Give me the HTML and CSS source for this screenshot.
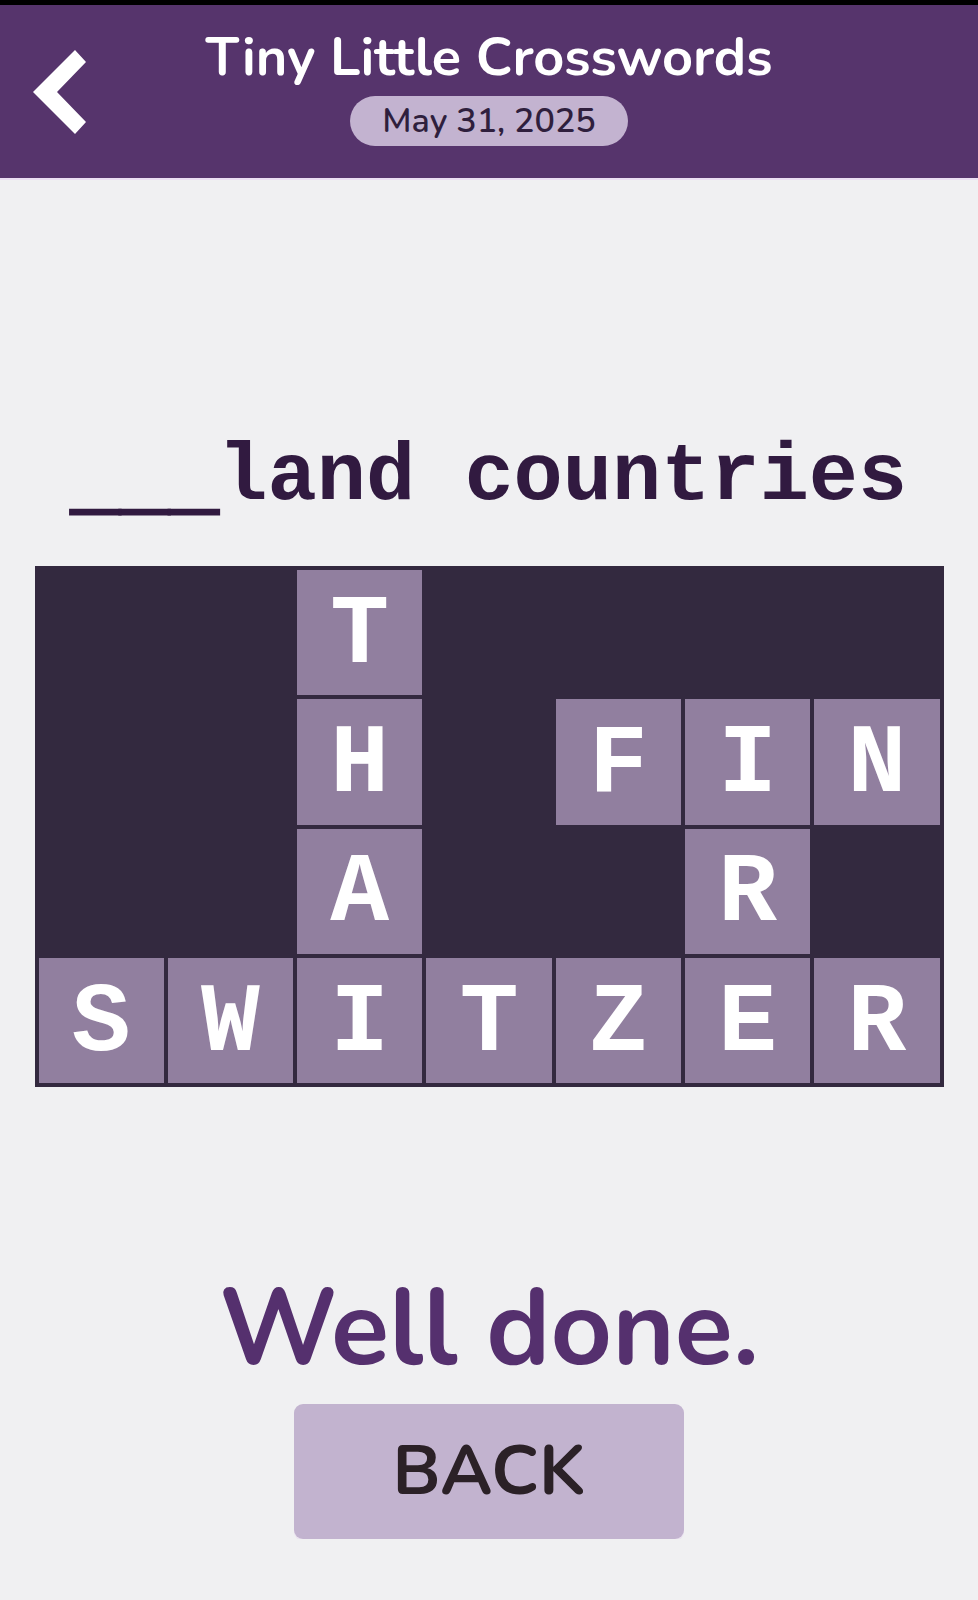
FILE: index.html
```html
<!DOCTYPE html>
<html lang="en">
<head>
  <meta charset="UTF-8" />
  <title>Tiny Little Crosswords</title>
  <link rel="stylesheet" href="styles.css">
</head>
<body>

<div class="statusbar"></div>

<header class="topbar">
  <button class="back-arrow" aria-label="Back">
    <svg width="60" height="90" viewBox="28 47 60 90">
      <polygon points="75,50 86,62 57,92 86,122 75,134 33,92" fill="#fff" />
    </svg>
  </button>
  <div class="title-block">
    <h1>Tiny Little Crosswords</h1>
    <span class="date-pill">May 31, 2025</span>
  </div>
  <div></div>
</header>

<main class="puzzle">
  <p class="clue"><span class="blank">___</span>land countries</p>

  <div class="board">
    <!-- fila 1 -->
    <div class="cell block"></div>
    <div class="cell block"></div>
    <div class="cell">T</div>
    <div class="cell block"></div>
    <div class="cell block"></div>
    <div class="cell block"></div>
    <div class="cell block"></div>
    <!-- fila 2 -->
    <div class="cell block"></div>
    <div class="cell block"></div>
    <div class="cell">H</div>
    <div class="cell block"></div>
    <div class="cell">F</div>
    <div class="cell">I</div>
    <div class="cell">N</div>
    <!-- fila 3 -->
    <div class="cell block"></div>
    <div class="cell block"></div>
    <div class="cell">A</div>
    <div class="cell block"></div>
    <div class="cell block"></div>
    <div class="cell">R</div>
    <div class="cell block"></div>
    <!-- fila 4 -->
    <div class="cell">S</div>
    <div class="cell">W</div>
    <div class="cell">I</div>
    <div class="cell">T</div>
    <div class="cell">Z</div>
    <div class="cell">E</div>
    <div class="cell">R</div>
  </div>

  <h2 class="done">Well done.</h2>
  <button class="back-btn">BACK</button>
</main>

</body>
</html>
```

FILE: styles.css
```css
body {
  margin: 0;
  background: #f0f0f2;
  font-family: "Nunito", "Lato", sans-serif;
}

.statusbar {
  height: 5px;
  background: #000;
}

.topbar {
  display: grid;
  grid-template-columns: 1fr auto 1fr;
  height: 173px;
  background: #56346c;
  border-bottom: 2px solid #ebdff3;
}

.back-arrow {
  align-self: center;
  justify-self: start;
  display: flex;
  padding: 0 0 0 28px;
  margin: 0;
  border: none;
  background: none;
  cursor: pointer;
}

.back-arrow svg {
  display: block;
}

.title-block {
  display: flex;
  flex-direction: column;
  align-items: center;
  padding-top: 20px;
}

.topbar h1 {
  margin: 0;
  color: #fff;
  font-size: 54px;
  font-weight: 700;
  line-height: 1.2;
}

.date-pill {
  margin-top: 6px;
  padding: 0 32px;
  height: 50px;
  line-height: 50px;
  border-radius: 25px;
  background: #c3b3d0;
  color: #2f1f3d;
  font-size: 34px;
  font-weight: 600;
}

.puzzle {
  display: flex;
  flex-direction: column;
  align-items: center;
}

.clue {
  margin: 257px 0 0;
  font-family: "Liberation Mono", monospace;
  font-weight: bold;
  font-size: 82px;
  line-height: 1;
  color: #311a40;
}

/* rayas del hueco, más gruesas y un poco más abajo */
.clue .blank {
  -webkit-text-stroke: 3px #311a40;
  vertical-align: -6px;
}

.board {
  display: grid;
  grid-template-columns: repeat(7, 1fr);
  gap: 4px;
  width: 909px;
  box-sizing: border-box;
  padding: 4px;
  margin-top: 41px;
  background: #33293f;
}

.cell {
  aspect-ratio: 1;
  display: flex;
  align-items: center;
  justify-content: center;
  padding-top: 6px;
  box-sizing: border-box;
  background: #917f9f;
  color: #fff;
  font-family: "Liberation Mono", monospace;
  font-weight: bold;
  font-size: 98px;
  line-height: 1;
}

.cell.block {
  background: #33293f;
}

.done {
  margin: 178px 0 0;
  color: #55306e;
  font-size: 107px;
  font-weight: 700;
  line-height: 1.2;
}

.back-btn {
  margin-top: 10px;
  width: 390px;
  height: 135px;
  border: none;
  border-radius: 9px;
  background: #c2b3cf;
  box-shadow: 0 2px 0 #ebe3f0;
  color: #2b2127;
  font-family: inherit;
  font-size: 70px;
  font-weight: 700;
  cursor: pointer;
}
```
